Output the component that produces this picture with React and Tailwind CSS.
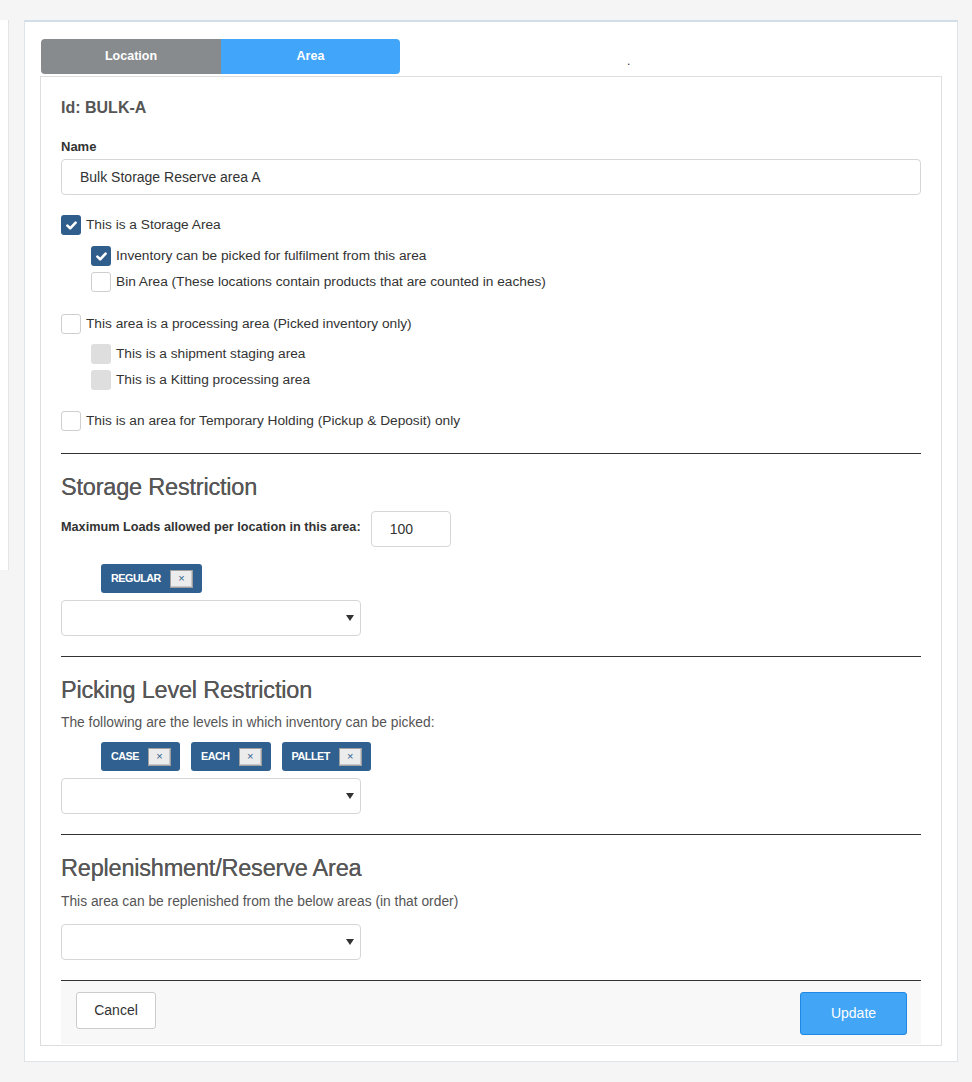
import React from "react";

const FONT = { fontFamily: '"Liberation Sans", Arial, sans-serif' };

function CheckBox({ state, label }) {
  // state: "on" | "off" | "disabled"
  return (
    <div className="flex items-center h-5">
      {state === "on" && (
        <span className="w-5 h-5 rounded-[3px] bg-[#2f5d8c] flex items-center justify-center">
          <svg width="11" height="9" viewBox="0 0 11 9">
            <path d="M1.4 4.6 L4.2 7.3 L9.6 1.6" fill="none" stroke="#fff" strokeWidth="2.6" strokeLinecap="round" strokeLinejoin="round" />
          </svg>
        </span>
      )}
      {state === "off" && (
        <span className="w-5 h-5 rounded-[3px] bg-white border border-[#cfcfcf]" />
      )}
      {state === "disabled" && (
        <span className="w-5 h-5 rounded-[3px] bg-[#dedede]" />
      )}
      <span className="ml-[5px] text-[13.7px] text-[#333]">{label}</span>
    </div>
  );
}

function Tag({ label }) {
  return (
    <div className="h-[29px] bg-[#30608f] rounded-[3px] flex items-center pl-[10px] pr-[9px]">
      <span className="text-white text-[10.8px] font-bold tracking-[-0.5px]">{label}</span>
      <span className="ml-[9px] w-[23px] h-[18px] bg-[#ececec] border border-[#a0a0a0] shadow-[inset_-1px_-1px_0_#c8c8c8] flex items-center justify-center text-[11px] leading-none text-[#30608f]">
        ×
      </span>
    </div>
  );
}

function Select() {
  return (
    <div className="w-[300px] h-9 bg-white border border-[#d6d6d6] rounded-[4px] flex items-center justify-end pr-[6px]">
      <svg width="8" height="6" viewBox="0 0 8 6">
        <path d="M0 0 H8 L4 6 Z" fill="#333" />
      </svg>
    </div>
  );
}

function Heading({ children }) {
  return (
    <h2 className="mt-[19px] text-[23.5px] leading-[28px] text-[#575757] tracking-[-0.2px] [text-shadow:0_0_0.4px_#575757]">
      {children}
    </h2>
  );
}

export default function App() {
  return (
    <div className="min-h-[1082px] bg-[#f5f5f5] flex items-start pt-5" style={FONT}>
      {/* left sliver panel */}
      <div className="w-[9px] h-[550px] bg-white border-r border-[#e4e4e4]" />

      {/* main panel */}
      <div className="ml-[15px] w-[934px] bg-white border border-[#dde4ea] border-t-2 border-t-[#d2dee7] px-[15px] pt-[17px] pb-[15px]">
        {/* tabs */}
        <div className="flex items-center ml-px">
          <div className="w-[180px] h-[35px] bg-[#888b8d] rounded-l-[4px] flex items-center justify-center text-white text-[12.5px] font-bold">
            Location
          </div>
          <div className="w-[179px] h-[35px] bg-[#41a5fa] rounded-r-[4px] flex items-center justify-center text-white text-[12.5px] font-bold">
            Area
          </div>
          <span className="ml-[227px] mt-[8px] text-[12px] text-[#333]">.</span>
        </div>

        {/* form box */}
        <div className="mt-[2px] border border-[#dedede] px-5 pb-px">
          <div className="pt-[21px] text-[16px] leading-5 font-bold text-[#555]">Id: BULK-A</div>

          <div className="mt-[21px] text-[13px] leading-4 font-bold text-[#333]">Name</div>
          <div className="mt-1 h-9 border border-[#d6d6d6] rounded-[4px] flex items-center px-[18px] text-[14px] text-[#333]">
            Bulk Storage Reserve area A
          </div>

          <div className="mt-5">
            <CheckBox state="on" label="This is a Storage Area" />
          </div>
          <div className="ml-[30px] mt-[11px]">
            <CheckBox state="on" label="Inventory can be picked for fulfilment from this area" />
          </div>
          <div className="ml-[30px] mt-[6px]">
            <CheckBox state="off" label="Bin Area (These locations contain products that are counted in eaches)" />
          </div>

          <div className="mt-[22px]">
            <CheckBox state="off" label="This area is a processing area (Picked inventory only)" />
          </div>
          <div className="ml-[30px] mt-[10px]">
            <CheckBox state="disabled" label="This is a shipment staging area" />
          </div>
          <div className="ml-[30px] mt-[6px]">
            <CheckBox state="disabled" label="This is a Kitting processing area" />
          </div>

          <div className="mt-[21px]">
            <CheckBox state="off" label="This is an area for Temporary Holding (Pickup & Deposit) only" />
          </div>

          <hr className="mt-[22px] border-0 border-t border-[#333]" />

          {/* storage restriction */}
          <Heading>Storage Restriction</Heading>
          <div className="mt-[10px] flex items-start">
            <span className="mt-[8px] text-[12.7px] leading-4 font-bold text-[#333]">
              Maximum Loads allowed per location in this area:
            </span>
            <div className="ml-[10px] w-20 h-9 border border-[#d6d6d6] rounded-[4px] flex items-center pl-[18px] text-[14px] text-[#333]">
              100
            </div>
          </div>
          <div className="mt-[17px] ml-10 flex">
            <Tag label="REGULAR" />
          </div>
          <div className="mt-[7px]">
            <Select />
          </div>

          <hr className="mt-5 border-0 border-t border-[#333]" />

          {/* picking level */}
          <Heading>Picking Level Restriction</Heading>
          <p className="mt-[11px] text-[13.8px] leading-4 text-[#555]">
            The following are the levels in which inventory can be picked:
          </p>
          <div className="mt-[11px] ml-10 flex gap-[11px]">
            <Tag label="CASE" />
            <Tag label="EACH" />
            <Tag label="PALLET" />
          </div>
          <div className="mt-[7px]">
            <Select />
          </div>

          <hr className="mt-5 border-0 border-t border-[#333]" />

          {/* replenishment */}
          <Heading>Replenishment/Reserve Area</Heading>
          <p className="mt-[12px] text-[13.8px] leading-4 text-[#555]">
            This area can be replenished from the below areas (in that order)
          </p>
          <div className="mt-[14px]">
            <Select />
          </div>

          <hr className="mt-5 border-0 border-t border-[#333]" />

          {/* footer */}
          <div className="h-[63px] bg-[#f8f8f8] flex items-start justify-between pt-[11px] pl-[15px] pr-[14px]">
            <button className="w-20 h-[37px] bg-white border border-[#cccccc] rounded-[3px] text-[14px] text-[#333]">
              Cancel
            </button>
            <button className="w-[107px] h-[43px] bg-[#42a5f5] border border-[#1e88e5] rounded-[3px] text-[14px] text-white">
              Update
            </button>
          </div>
        </div>
      </div>
    </div>
  );
}
